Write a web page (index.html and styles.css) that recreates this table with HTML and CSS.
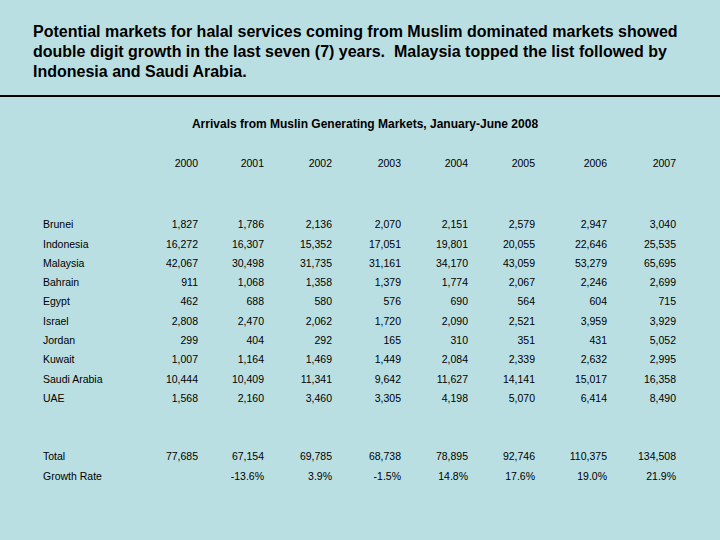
FILE: index.html
```html
<!DOCTYPE html>
<html>
<head>
<meta charset="utf-8">
<link rel="stylesheet" href="styles.css">
</head>
<body>
<div class="page">
  <p class="intro">Potential markets for halal services coming from Muslim dominated markets showed double digit growth in the last seven (7) years.&nbsp; Malaysia topped the list followed by Indonesia and Saudi Arabia.</p>
  <hr class="rule">
  <h1 class="title">Arrivals from Muslin Generating Markets, January-June 2008</h1>
  <div class="table">
    <div class="row head"><span></span><span>2000</span><span>2001</span><span>2002</span><span>2003</span><span>2004</span><span>2005</span><span>2006</span><span>2007</span></div>
    <div class="body">
      <div class="row"><span>Brunei</span><span>1,827</span><span>1,786</span><span>2,136</span><span>2,070</span><span>2,151</span><span>2,579</span><span>2,947</span><span>3,040</span></div>
      <div class="row"><span>Indonesia</span><span>16,272</span><span>16,307</span><span>15,352</span><span>17,051</span><span>19,801</span><span>20,055</span><span>22,646</span><span>25,535</span></div>
      <div class="row"><span>Malaysia</span><span>42,067</span><span>30,498</span><span>31,735</span><span>31,161</span><span>34,170</span><span>43,059</span><span>53,279</span><span>65,695</span></div>
      <div class="row"><span>Bahrain</span><span>911</span><span>1,068</span><span>1,358</span><span>1,379</span><span>1,774</span><span>2,067</span><span>2,246</span><span>2,699</span></div>
      <div class="row"><span>Egypt</span><span>462</span><span>688</span><span>580</span><span>576</span><span>690</span><span>564</span><span>604</span><span>715</span></div>
      <div class="row"><span>Israel</span><span>2,808</span><span>2,470</span><span>2,062</span><span>1,720</span><span>2,090</span><span>2,521</span><span>3,959</span><span>3,929</span></div>
      <div class="row"><span>Jordan</span><span>299</span><span>404</span><span>292</span><span>165</span><span>310</span><span>351</span><span>431</span><span>5,052</span></div>
      <div class="row"><span>Kuwait</span><span>1,007</span><span>1,164</span><span>1,469</span><span>1,449</span><span>2,084</span><span>2,339</span><span>2,632</span><span>2,995</span></div>
      <div class="row"><span>Saudi Arabia</span><span>10,444</span><span>10,409</span><span>11,341</span><span>9,642</span><span>11,627</span><span>14,141</span><span>15,017</span><span>16,358</span></div>
      <div class="row"><span>UAE</span><span>1,568</span><span>2,160</span><span>3,460</span><span>3,305</span><span>4,198</span><span>5,070</span><span>6,414</span><span>8,490</span></div>
    </div>
    <div class="foot">
      <div class="row"><span>Total</span><span>77,685</span><span>67,154</span><span>69,785</span><span>68,738</span><span>78,895</span><span>92,746</span><span>110,375</span><span>134,508</span></div>
      <div class="row"><span>Growth Rate</span><span></span><span>-13.6%</span><span>3.9%</span><span>-1.5%</span><span>14.8%</span><span>17.6%</span><span>19.0%</span><span>21.9%</span></div>
    </div>
  </div>
</div>
</body>
</html>
```
FILE: styles.css
```css
html, body {
  margin: 0;
  padding: 0;
  background: #badfe3;
}
.page {
  width: 720px;
  height: 540px;
  overflow: hidden;
  font-family: "Liberation Sans", Arial, sans-serif;
  color: #000;
}
.intro {
  margin: 0;
  width: 650px;
  padding: 22px 0 0 33px;
  font-size: 16px;
  font-weight: bold;
  line-height: 20px;
}
.rule {
  margin: 13px 0 0 0;
  border: 0;
  height: 2px;
  background: #000;
}
.title {
  margin: 19px 0 0 0;
  font-size: 12px;
  line-height: 16px;
  font-weight: bold;
  text-align: center;
  padding-left: 10px;
}
.table {
  padding-left: 43px;
  font-size: 10.5px;
  margin-top: 22px;
}
.row {
  display: grid;
  grid-template-columns: 95px 60px 66px 68px 69px 67px 67px 72px 69px;
  height: 19.3px;
  line-height: 19.3px;
}
.row span {
  text-align: right;
}
.row span:first-child {
  text-align: left;
}
.body {
  margin-top: 42px;
}
.foot {
  margin-top: 39px;
}
```
